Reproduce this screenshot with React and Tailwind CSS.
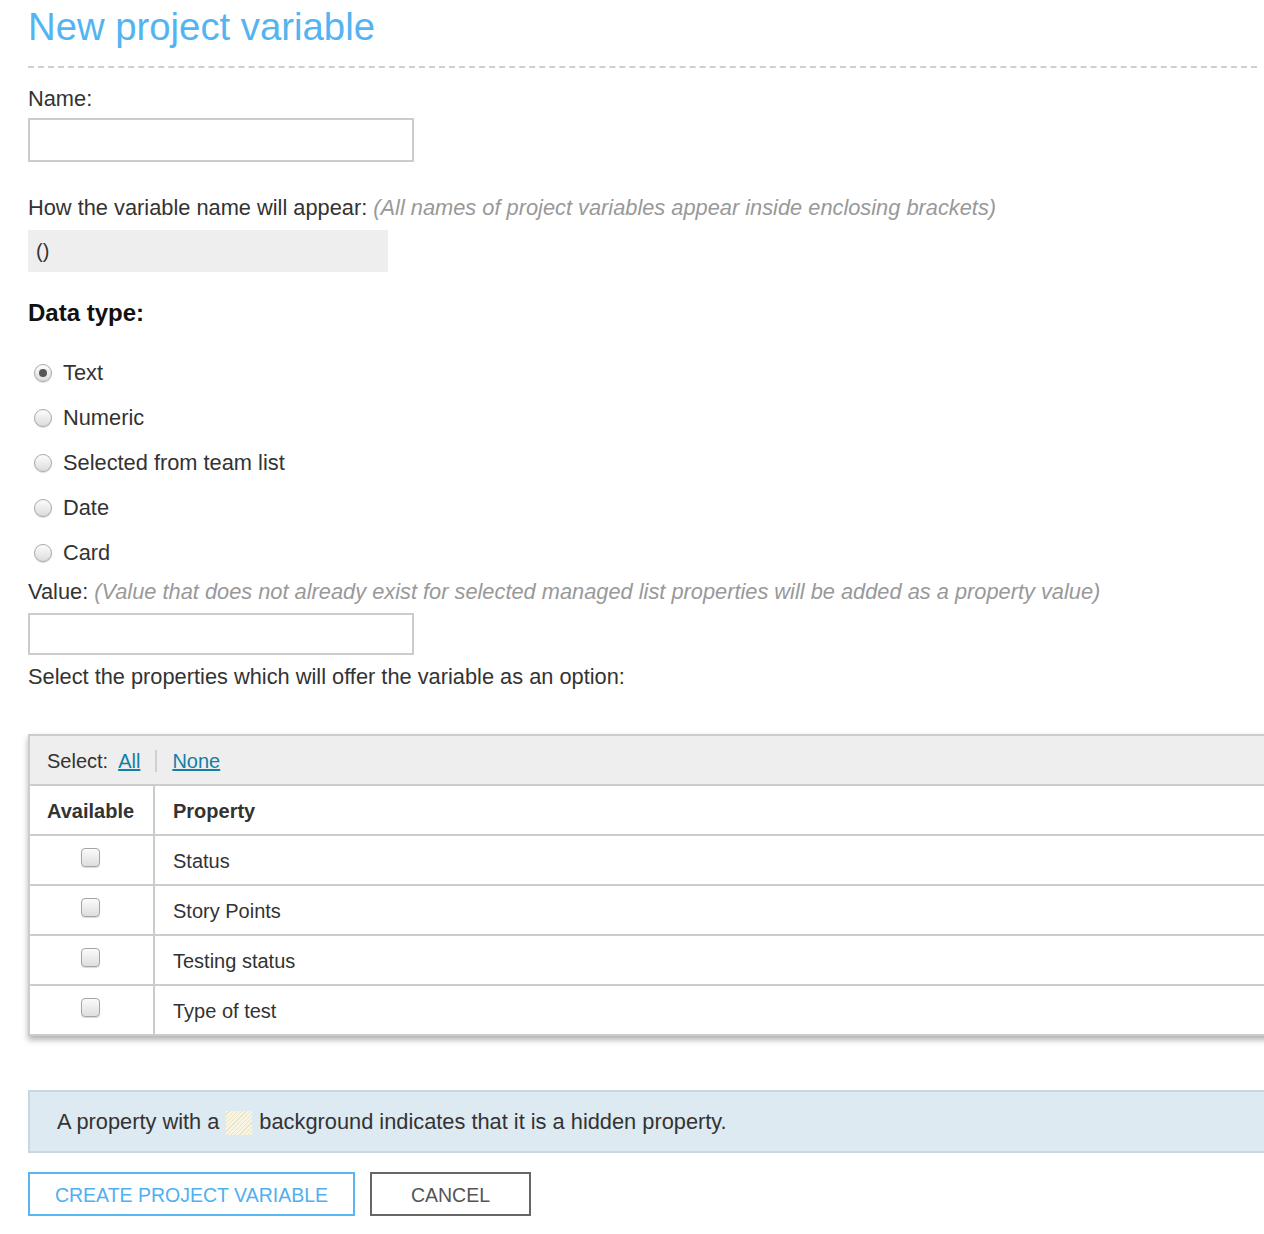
const font = { fontFamily: '"Liberation Sans", Arial, sans-serif' };

function Radio({ checked }) {
  return (
    <span className="flex h-[18px] w-[18px] items-center justify-center rounded-full border border-[#a9a9a9] bg-gradient-to-b from-[#fdfdfd] to-[#dcdcdc] shadow-[0_1px_1px_rgba(0,0,0,0.15)]">
      {checked && <span className="h-[8px] w-[8px] rounded-full bg-[#555]" />}
    </span>
  );
}

function Checkbox() {
  return (
    <span className="block h-[19px] w-[19px] rounded-[4px] border border-[#a5a5a5] bg-gradient-to-b from-[#fbfbfb] to-[#dedede] shadow-[0_1px_1px_rgba(0,0,0,0.15)]" />
  );
}

const types = ["Text", "Numeric", "Selected from team list", "Date", "Card"];
const properties = ["Status", "Story Points", "Testing status", "Type of test"];

export default function App() {
  return (
    <div className="min-h-[1234px] w-full overflow-hidden bg-white text-[21.8px] text-[#333]" style={font}>
      <div className="pl-[28px]">
        <h1 className="text-[38.3px] font-normal leading-[53px] text-[#54b4f2]">New project variable</h1>
        <div className="mt-[13px] w-[1229px] border-b-2 border-dashed border-[#cfcfcf]" />

        <div className="mt-[19px] leading-6">Name:</div>
        <div className="mt-[7px] h-[44px] w-[386px] border-2 border-[#cccccc]" />

        <div className="mt-[34px] leading-6">
          How the variable name will appear:{" "}
          <span className="italic text-[#999]">(All names of project variables appear inside enclosing brackets)</span>
        </div>
        <div className="mt-[10px] flex h-[42px] w-[360px] items-center bg-[#eeeeee] pl-[8px] text-[20px]">()</div>

        <div className="mt-[27px] text-[24px] font-bold leading-[28px] text-[#111]">Data type:</div>

        <div className="mt-[23px] flex flex-col">
          {types.map((t, i) => (
            <div key={t} className="flex h-[45px] items-center gap-[11px] pl-[6px]">
              <Radio checked={i === 0} />
              <span className="pt-[1px]">{t}</span>
            </div>
          ))}
        </div>

        <div className="mt-[5px] leading-6">
          Value:{" "}
          <span className="italic text-[#999]">
            (Value that does not already exist for selected managed list properties will be added as a property value)
          </span>
        </div>
        <div className="mt-[9px] h-[42px] w-[386px] border-2 border-[#cccccc]" />

        <div className="mt-[10px] leading-6">Select the properties which will offer the variable as an option:</div>

        <div className="mt-[45px] w-[1300px] border-2 border-[#cccccc] shadow-[0_4px_6px_rgba(0,0,0,0.3)]">
          <div className="flex h-[48px] items-center bg-[#eeeeee] pl-[17px] pt-[1px] text-[20px]">
            <span>Select:</span>
            <a href="#" className="ml-[10px] text-[#137ea6] underline">All</a>
            <span className="mx-[15px] h-[22px] w-[2px] bg-[#d0d0d0]" />
            <a href="#" className="text-[#137ea6] underline">None</a>
          </div>
          <div className="flex h-[50px] border-t-2 border-[#cccccc] text-[20px] font-bold">
            <div className="flex w-[125px] items-center border-r-2 border-[#cccccc] pl-[17px] pt-[1px]">Available</div>
            <div className="flex items-center pl-[18px] pt-[1px]">Property</div>
          </div>
          {properties.map((p) => (
            <div key={p} className="flex h-[50px] border-t-2 border-[#cccccc] text-[20px]">
              <div className="flex w-[125px] items-center justify-center border-r-2 border-[#cccccc] pb-[6px] pr-[2px]">
                <Checkbox />
              </div>
              <div className="flex items-center pl-[18px] pt-[1px]">{p}</div>
            </div>
          ))}
        </div>

        <div className="mt-[54px] flex h-[63px] w-[1300px] items-center border-2 border-[#c8d8e2] bg-[#ddeaf2] pl-[27px] pt-[2px]">
          <span>A property with a</span>
          <span className="mx-[7px] h-[24px] w-[26px] bg-[repeating-linear-gradient(135deg,#f9f5e6_0px,#f9f5e6_2px,#ece2c4_2px,#ece2c4_3px)]" />
          <span>background indicates that it is a hidden property.</span>
        </div>

        <div className="mt-[19px] flex gap-[15px]">
          <button className="h-[44px] w-[327px] border-2 border-[#5ab6f2] pt-[3px] text-[19.5px] uppercase text-[#4fb0ef]">
            Create project variable
          </button>
          <button className="h-[44px] w-[161px] border-2 border-[#666] pt-[3px] text-[19.5px] uppercase text-[#555]">
            Cancel
          </button>
        </div>
      </div>
    </div>
  );
}
